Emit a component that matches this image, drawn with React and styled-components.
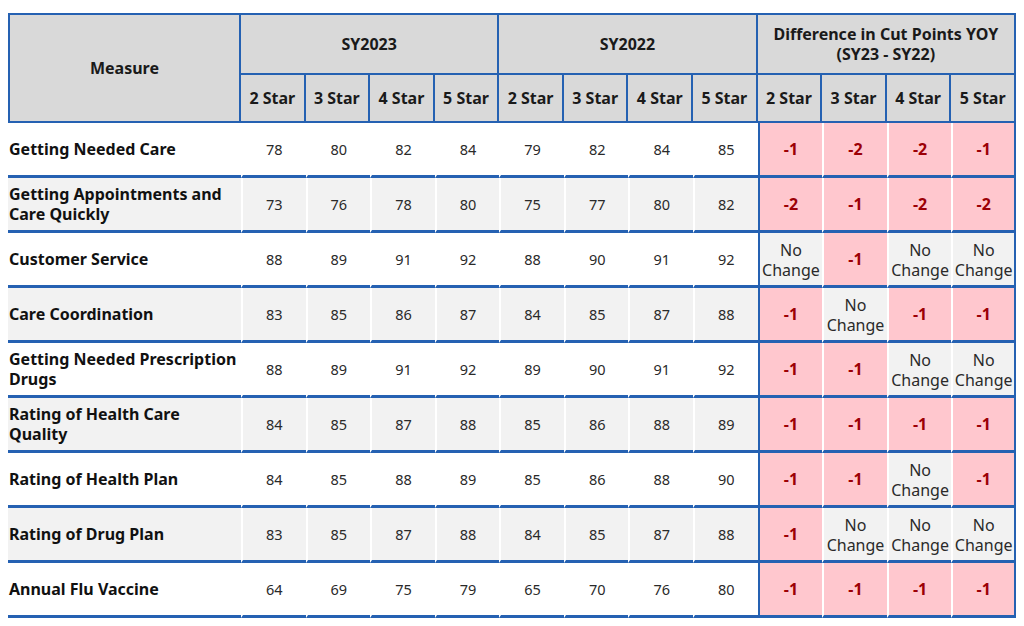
import React from 'react';
import styled, { createGlobalStyle } from 'styled-components';

const BLUE = '#2561b2';
const HEAD_BG = '#d9d9d9';
const ROW_ALT = '#f2f2f2';
const PINK = '#ffc7ce';
const DARK_RED = '#9c0006';

const GlobalStyle = createGlobalStyle`
  html, body {
    margin: 0;
    padding: 0;
    background: #ffffff;
  }
  body {
    font-family: "Noto Sans", "Open Sans", sans-serif;
    color: #1a1a1a;
  }
`;

const measures = [
  { name: 'Getting Needed Care', sy23: [78, 80, 82, 84], sy22: [79, 82, 84, 85], diff: [-1, -2, -2, -1] },
  { name: 'Getting Appointments and Care Quickly', sy23: [73, 76, 78, 80], sy22: [75, 77, 80, 82], diff: [-2, -1, -2, -2] },
  { name: 'Customer Service', sy23: [88, 89, 91, 92], sy22: [88, 90, 91, 92], diff: [0, -1, 0, 0] },
  { name: 'Care Coordination', sy23: [83, 85, 86, 87], sy22: [84, 85, 87, 88], diff: [-1, 0, -1, -1] },
  { name: 'Getting Needed Prescription Drugs', sy23: [88, 89, 91, 92], sy22: [89, 90, 91, 92], diff: [-1, -1, 0, 0] },
  { name: 'Rating of Health Care Quality', sy23: [84, 85, 87, 88], sy22: [85, 86, 88, 89], diff: [-1, -1, -1, -1] },
  { name: 'Rating of Health Plan', sy23: [84, 85, 88, 89], sy22: [85, 86, 88, 90], diff: [-1, -1, 0, -1] },
  { name: 'Rating of Drug Plan', sy23: [83, 85, 87, 88], sy22: [84, 85, 87, 88], diff: [-1, 0, 0, 0] },
  { name: 'Annual Flu Vaccine', sy23: [64, 69, 75, 79], sy22: [65, 70, 76, 80], diff: [-1, -1, -1, -1] },
];

const stars = ['2 Star', '3 Star', '4 Star', '5 Star'];

const Page = styled.div`
  padding: 13px 8px 0 8px;
`;

const Table = styled.table`
  width: 1008px;
  table-layout: fixed;
  border-collapse: separate;
  border-spacing: 0;
`;

const HeadCell = styled.th`
  background: ${HEAD_BG};
  font-weight: 700;
  font-size: 16px;
  line-height: 20px;
  text-align: center;
  vertical-align: middle;
  color: #1a1a1a;
  padding: 0;
  border-right: 2px solid ${BLUE};
  border-bottom: 2px solid ${BLUE};
  border-top: ${({ $top }) => ($top ? `2px solid ${BLUE}` : 'none')};
  border-left: ${({ $left }) => ($left ? `2px solid ${BLUE}` : 'none')};
  height: ${({ $h }) => $h || 'auto'};
`;

const Row = styled.tr`
  background: ${({ $alt }) => ($alt ? ROW_ALT : '#ffffff')};
  height: 55px;
`;

const NameCell = styled.td`
  font-weight: 700;
  font-size: 16px;
  line-height: 20px;
  padding: 0 4px 0 1px;
  border-bottom: 3px solid ${BLUE};
  vertical-align: middle;
  color: #111;
`;

const NumCell = styled.td`
  font-size: 14.5px;
  text-align: center;
  vertical-align: middle;
  padding: 0;
  color: #2a2a2a;
  border-left: 2px solid #ffffff;
  border-bottom: 3px solid ${BLUE};
`;

const DiffCell = styled.td`
  text-align: center;
  vertical-align: middle;
  padding: 0;
  background: ${({ $changed }) => ($changed ? PINK : ROW_ALT)};
  color: ${({ $changed }) => ($changed ? DARK_RED : '#2a2a2a')};
  font-weight: ${({ $changed }) => ($changed ? 700 : 400)};
  font-size: 16px;
  line-height: 20px;
  border-bottom: 3px solid ${BLUE};
  border-left: ${({ $first }) => ($first ? `2px solid ${BLUE}` : '2px solid #ffffff')};
  border-right: ${({ $last }) => ($last ? `2px solid ${BLUE}` : 'none')};
`;

const NoChange = styled.span`
  display: block;
  padding-top: 2px;
`;

export default function App() {
  return (
    <>
      <GlobalStyle />
      <Page>
        <Table>
          <colgroup>
            <col style={{ width: '233px' }} />
            {Array.from({ length: 12 }).map((_, i) => (
              <col key={i} />
            ))}
          </colgroup>
          <thead>
            <tr>
              <HeadCell rowSpan={2} $top $left>Measure</HeadCell>
              <HeadCell colSpan={4} $top $h="58px">SY2023</HeadCell>
              <HeadCell colSpan={4} $top>SY2022</HeadCell>
              <HeadCell colSpan={4} $top>
                Difference in Cut Points YOY
                <br />
                (SY23 - SY22)
              </HeadCell>
            </tr>
            <tr>
              {[0, 1, 2].map((g) =>
                stars.map((s) => (
                  <HeadCell key={`${g}-${s}`} $h="46px">{s}</HeadCell>
                ))
              )}
            </tr>
          </thead>
          <tbody>
            {measures.map((m, i) => (
              <Row key={m.name} $alt={i % 2 === 1}>
                <NameCell>{m.name}</NameCell>
                {[...m.sy23, ...m.sy22].map((v, j) => (
                  <NumCell key={j}>{v}</NumCell>
                ))}
                {m.diff.map((d, j) => (
                  <DiffCell key={`d${j}`} $changed={d !== 0} $first={j === 0} $last={j === 3}>
                    {d !== 0 ? d : <NoChange>No<br />Change</NoChange>}
                  </DiffCell>
                ))}
              </Row>
            ))}
          </tbody>
        </Table>
      </Page>
    </>
  );
}
